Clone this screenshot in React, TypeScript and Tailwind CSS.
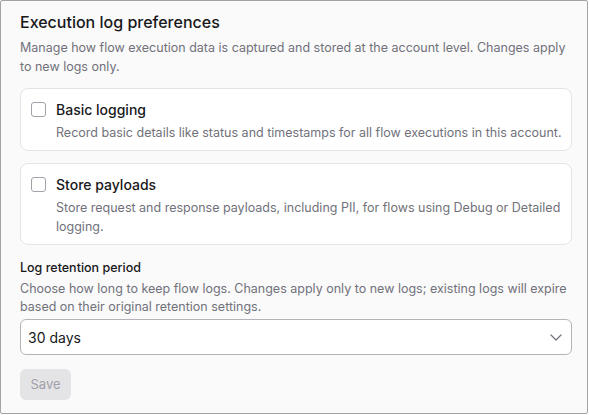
function OptionCard({ title, desc }: { title: string; desc: string }) {
  return (
    <label className="flex gap-[10px] rounded-lg border border-[#e4e4e7] bg-white pl-[10px] pr-[4px] pt-[11px] pb-[8px]">
      <span className="mt-[2px] block h-[15px] w-[15px] shrink-0 rounded-[3px] border border-[#a1a1aa] bg-white" />
      <div>
        <p className="text-[14px] font-medium leading-[20px] text-[#18181b]">{title}</p>
        <p className="mt-[3px] text-[12.5px] leading-[19px] text-[#71717a]">{desc}</p>
      </div>
    </label>
  );
}

export default function App() {
  return (
    <div className="h-[415px] w-[589px] font-['Inter',sans-serif]">
      <div className="h-[414px] w-[588px] rounded-[2px] border border-[#a3a3a3] bg-[#fafafa] pl-[19px] pr-[15px] pt-[9px]">
        <h2 className="text-[16px] font-medium leading-[24px] text-[#18181b]">Execution log preferences</h2>
        <p className="mt-[4px] text-[12.5px] leading-[19px] text-[#71717a]">
          Manage how flow execution data is captured and stored at the account level. Changes apply to new logs only.
        </p>
        <div className="mt-[12px] flex flex-col gap-[12px]">
          <OptionCard
            title="Basic logging"
            desc="Record basic details like status and timestamps for all flow executions in this account."
          />
          <OptionCard
            title="Store payloads"
            desc="Store request and response payloads, including PII, for flows using Debug or Detailed logging."
          />
        </div>
        <div className="mt-[14px]">
          <p className="text-[12.5px] font-medium leading-[18px] text-[#18181b]">Log retention period</p>
          <p className="mt-[3px] text-[12.5px] leading-[18px] text-[#71717a]">
            Choose how long to keep flow logs. Changes apply only to new logs; existing logs will expire based on their original retention settings.
          </p>
          <div className="mt-[3px] flex h-[36px] items-center justify-between rounded-md border border-[#b4b4b8] bg-white pl-[7px] pr-[9px]">
            <span className="text-[14px] text-[#18181b]">30 days</span>
            <svg width="12" height="7" viewBox="0 0 12 7" fill="none" className="text-[#71717a]">
              <path d="M1 1l5 5 5-5" stroke="currentColor" strokeWidth="1.2" strokeLinecap="round" strokeLinejoin="round" />
            </svg>
          </div>
        </div>
        <button className="mt-[14px] h-[31px] w-[51px] rounded-md bg-[#e4e4e7] text-[13px] text-[#a1a1aa]" disabled>
          Save
        </button>
      </div>
    </div>
  );
}
